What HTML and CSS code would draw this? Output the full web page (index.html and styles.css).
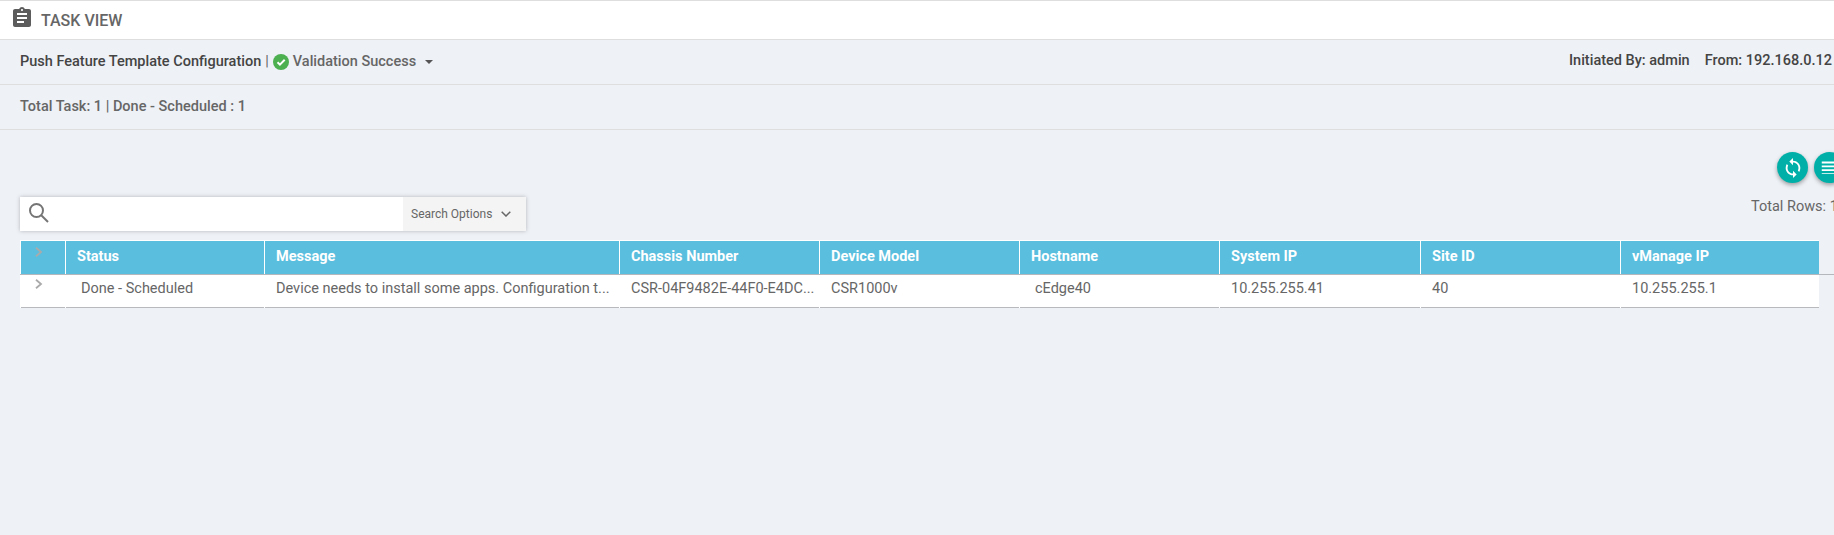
FILE: index.html
```
<!DOCTYPE html>
<html lang="en">
<head>
<meta charset="utf-8">
<title>Task View</title>
<link rel="stylesheet" href="styles.css">
</head>
<body>
<header class="titlebar">
  <svg class="clip" viewBox="0 0 24 24"><path d="M19 3h-4.18C14.4 1.84 13.3 1 12 1c-1.3 0-2.4.84-2.82 2H5c-1.1 0-2 .9-2 2v14c0 1.100.9 2 2 2h14c1.100 0 2-.9 2-2V5c0-1.100-.9-2-2-2zm-7 0c.55 0 1 .45 1 1s-.45 1-1 1-1-.45-1-1 .45-1 1-1zm2 14H7v-2h7v2zm3-4H7v-2h10v2zm0-4H7V7h10v2z"/></svg>
  <h1 class="title">TASK VIEW</h1>
</header>
<section class="bar">
  <span class="dark name">Push Feature Template Configuration</span>
  <span class="sep">|</span>
  <svg class="check" viewBox="0 0 16 16"><circle cx="8" cy="8" r="8"/><path d="M4.500 8.300l2.400 2.300 4.800-4.800"/></svg>
  <span class="valid">Validation Success</span>
  <span class="caret"></span>
  <div class="origin dark"><span class="by">Initiated By: admin</span><span class="from">From: 192.168.0.12</span></div>
</section>
<section class="bar"><span class="totals">Total Task: 1 | Done - Scheduled : 1</span></section>
<main class="content">
  <div class="actions">
    <span class="round"><svg viewBox="0 0 24 24"><path d="M12 4V1L8 5l4 4V6c3.310 0 6 2.690 6 6 0 1.010-.25 1.970-.7 2.800l1.460 1.460C19.540 15.030 20 13.570 20 12c0-4.420-3.580-8-8-8zm0 14c-3.310 0-6-2.690-6-6 0-1.010.25-1.970.7-2.800L5.240 7.740C4.460 8.970 4 10.430 4 12c0 4.420 3.580 8 8 8v3l4-4-4-4v3z"/></svg></span>
    <span class="round"><svg viewBox="0 0 24 24"><path d="M3 5h18v2H3zM3 9.200h18v2H3zM3 13.400h18v2H3zM3 17.600h18v1H3z"/></svg></span>
  </div>
  <div class="tools">
    <div class="search">
      <svg class="glass" viewBox="0 0 20 20"><circle cx="7.500" cy="7.500" r="6.500"/><path d="M12 12l7 7"/></svg>
      <div class="options"><span class="opt">Search Options</span><svg class="down" viewBox="0 0 10 6"><path d="M.7.7L5 5 9.300.7"/></svg></div>
    </div>
    <span class="rows">Total Rows: 1</span>
  </div>
  <div class="table">
    <div class="row head">
      <div class="cell"><svg class="chev" viewBox="0 0 8 10"><path d="M1 .8L6 5 1 9.200"/></svg></div>
      <div class="cell">Status</div><div class="cell">Message</div><div class="cell">Chassis Number</div><div class="cell">Device Model</div><div class="cell">Hostname</div><div class="cell">System IP</div><div class="cell">Site ID</div><div class="cell">vManage IP</div>
    </div>
    <div class="rule"></div>
    <div class="row data">
      <div class="cell"><svg class="chev" viewBox="0 0 8 10"><path d="M1 .8L6 5 1 9.200"/></svg></div>
      <div class="cell inset">Done - Scheduled</div><div class="cell">Device needs to install some apps. Configuration t...</div><div class="cell">CSR-04F9482E-44F0-E4DC...</div><div class="cell">CSR1000v</div><div class="cell inset">cEdge40</div><div class="cell">10.255.255.41</div><div class="cell">40</div><div class="cell">10.255.255.1</div>
    </div>
  </div>
</main>
</body>
</html>
```
FILE: styles.css
```
* { box-sizing: border-box; }
body {
  margin: 0;
  height: 535px;
  overflow: hidden;
  background: #eef1f6;
  color: #666;
  font: 14.500px/20px Roboto, sans-serif;
  white-space: nowrap;
}
svg { display: block; flex: none; }
.titlebar {
  display: flex;
  height: 40px;
  padding-left: 10px;
  background: #fff;
  border-top: 1px solid #dedede;
  border-bottom: 1px solid #dedede;
}
.clip { width: 24px; height: 24px; margin-top: 5px; fill: #5c5c5c; }
.title { margin: 10px 0 0 7px; font-size: 16px; line-height: 20px; font-weight: 500; }
.bar {
  display: flex;
  align-items: center;
  height: 45px;
  padding-left: 20px;
  border-bottom: 1px solid #dedede;
  font-weight: 500;
}
.dark { color: #444; }
.sep { margin: 0 4px; font-weight: 400; }
.check { width: 16px; height: 16px; fill: #4caf50; }
.check path { fill: none; stroke: #fff; stroke-width: 2; }
.valid { margin-left: 4px; }
.caret { margin-left: 9px; border: 4px solid transparent; border-top-color: #555; border-bottom: 0; }
.origin { display: flex; width: 265px; margin: 0 0 2px auto; flex: none; }
.from { margin-left: 15px; }
.actions { display: flex; justify-content: flex-end; gap: 6px; height: 67px; padding-top: 22px; margin-right: -11px; }
.round {
  display: flex;
  align-items: center;
  justify-content: center;
  width: 31px;
  height: 31px;
  border-radius: 50%;
  background: #00b0a8;
  box-shadow: 0 2px 4px rgba(0, 0, 0, .35);
}
.round svg { width: 22px; height: 22px; fill: #fff; }
.tools { display: flex; height: 43px; padding-left: 20px; }
.search {
  display: flex;
  align-items: center;
  width: 506px;
  height: 34px;
  padding-left: 9px;
  background: #fff;
  box-shadow: 0 0 4px rgba(0, 0, 0, .25);
}
.glass { width: 20px; height: 20px; margin-bottom: 2px; fill: none; stroke: #757575; stroke-width: 2; }
.options {
  display: flex;
  align-items: center;
  width: 123px;
  height: 34px;
  margin-left: auto;
  padding-left: 8px;
  background: #f4f4f4;
  font-size: 12px;
}
.down { width: 10px; height: 6px; margin-left: 9px; fill: none; stroke: #666; stroke-width: 1.500; }
.rows { width: 83px; margin-left: auto; flex: none; }
.table { padding-left: 20px; }
.row {
  display: grid;
  grid-template-columns: 45px 199px 355px 200px 200px 200px 201px 200px 199px;
  width: 1799px;
}
.cell { padding-left: 12px; }
.head { height: 34px; padding-top: 1px; background: #fff; color: #fff; font-weight: 700; }
.head .cell { margin-left: 1px; background: #5abede; padding: 6px 0 0 11px; }
.rule { width: 1814px; height: 1px; background: #b4b7bb; }
.data { height: 33px; background: #fff; }
.data .cell { padding-top: 4px; border-bottom: 1px solid #b7b9bc; margin-left: 1px; padding-left: 11px; }
.data .inset { padding-left: 15px; }
.chev { width: 8px; height: 10px; margin-left: 3px; fill: none; stroke: #aaa; stroke-width: 1.800; }
```
